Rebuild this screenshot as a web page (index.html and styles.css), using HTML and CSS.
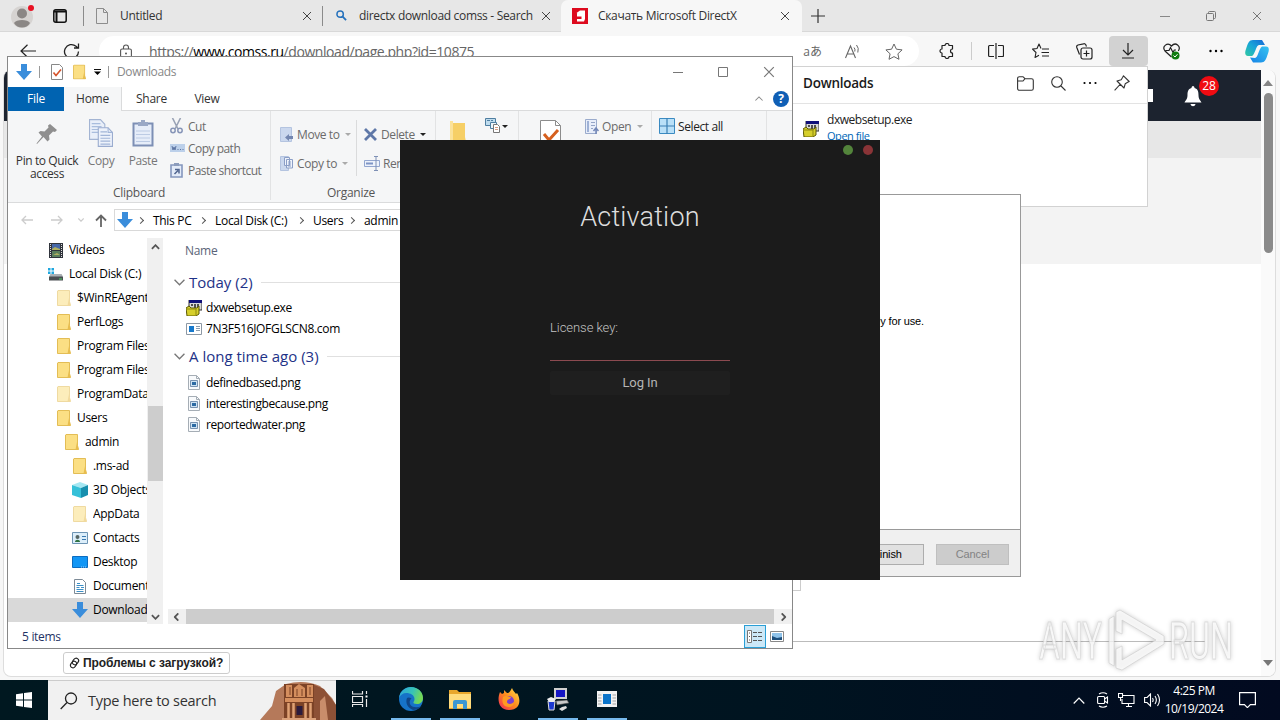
FILE: index.html
```html
<!DOCTYPE html>
<html lang="en">
<head>
    <meta charset="UTF-8">
    <meta name="viewport" content="width=device-width, initial-scale=1.0">
    <title>Desktop</title>
    <link rel="stylesheet" href="styles.css">
</head>
<body>

    <!-- Shared icons -->
    <svg class="defs" width="0" height="0">
        <symbol id="i-close" viewBox="0 0 10 10"><path d="M1 1l8 8M9 1L1 9" fill="none" stroke="currentColor"/></symbol>
        <symbol id="i-folder" viewBox="0 0 14 16"><path d="M1 .5h11.500v11l1 4H.5V1z" fill="#fbdf84" stroke="#e3bd55"/><path d="M12 8l1.500 7.500h-3z" fill="#e8bd4e"/></symbol>
        <symbol id="i-down" viewBox="0 0 16 16"><path d="M5 0h6v7h5l-8 9-8-9h5z" fill="#3a8ddb"/></symbol>
        <symbol id="i-chev" viewBox="0 0 10 6"><path d="M.5.5L5 5 9.500.5" fill="none" stroke="currentColor" stroke-width="1.200"/></symbol>
        <symbol id="i-chev-bold" viewBox="0 0 10 6"><path d="M1 1l4 4 4-4" fill="none" stroke="currentColor" stroke-width="2"/></symbol>
        <symbol id="i-tri" viewBox="0 0 6 3"><path d="M0 0h6L3 3z" fill="currentColor"/></symbol>
        <symbol id="i-png" viewBox="0 0 12 15"><path d="M.5.5h8l3 3v11H.5z" fill="#f8fafc" stroke="#a5adb5"/><path d="M8.500.5v3h3" fill="none" stroke="#a5adb5"/><path d="M2.500 5.500h7v6h-7z" fill="#cfe3f3" stroke="#7892b0"/><path d="M4 7h4v3H4z" fill="#2c6aa3"/></symbol>
        <symbol id="i-setup" viewBox="0 0 16 16"><path d="M3 0h13v10H3z" fill="#d8d8d8" stroke="#333"/><path d="M3 0h13v3H3z" fill="#10107a"/><path d="M5 5h2M8 5h2M11 5h2M8 7h2M11 7h2" stroke="#222" stroke-width="1.500"/><path d="M0 8l3-2 2 2h6l2-2v8l-3 2H1z" fill="#d6cf2c" stroke="#5c5905"/><path d="M1 9h9v6" fill="none" stroke="#8d880f"/></symbol>
        <symbol id="i-app" viewBox="0 0 16 12"><path d="M.5.5h15v11H.5z" fill="#fff" stroke="#8c98a4"/><path d="M3 3h5v6H3z" fill="#1779cc"/><path d="M10 3.500h4M10 5.500h4M10 7.500h4" stroke="#8b9db0"/></symbol>
        <symbol id="i-docs" viewBox="0 0 22 24"><path d="M.5.5h10l4 4v13H.5z" fill="#e9eff9" stroke="#a3b4d3"/><path d="M2.500 4h8M2.500 6.500h9M2.500 9h9M2.500 11.500h9" stroke="#a9bddd"/><path d="M8.500 7.500h9l4 4v12h-13z" fill="#edf2fb" stroke="#9aaccf"/><path d="M17.500 7.500v4h4M10.500 11h6M10.500 14h9M10.500 16.500h9M10.500 19h9M10.500 21.500h9" fill="none" stroke="#a1b5d8"/></symbol>
    </svg>

    <div class="desktop">

        <!-- Browser -->
        <div class="browser">
            <div class="tabstrip">
                <svg class="avatar" width="26" height="26" viewBox="0 0 26 26"><circle cx="11" cy="14" r="11" fill="#d6d3d1"/><circle cx="11" cy="10.500" r="5" fill="#8b8785"/><path d="M3 20c2-4 14-4 16 0-3 6-13 6-16 0z" fill="#8b8785"/><circle cx="20" cy="5" r="3" fill="#e81123"/></svg>
                <svg class="workspaces" width="14" height="14" viewBox="0 0 14 14"><rect x=".8" y=".8" width="12.400" height="12.400" rx="2" fill="none" stroke="#111" stroke-width="1.500"/><path d="M1 2.500h12M3.500 3v10" stroke="#111" stroke-width="2"/></svg>
                <span class="tab-sep"></span>
                <div class="tab tab-first">
                    <svg width="12" height="16" viewBox="0 0 12 16"><path d="M.5.5h7l4 4v11H.5zM7.500.5v4h4" fill="none" stroke="#8d8d8d"/></svg>
                    <span class="tab-title">Untitled</span>
                    <svg class="x" width="10" height="10"><use href="#i-close"/></svg>
                </div>
                <span class="tab-sep"></span>
                <div class="tab tab-search">
                    <svg width="11" height="11" viewBox="0 0 12 12"><circle cx="4.500" cy="4.500" r="3.500" fill="none" stroke="#2672bd" stroke-width="1.600"/><path d="M7 7l4 4" stroke="#2672bd" stroke-width="2"/></svg>
                    <span class="tab-title">directx download comss - Search</span>
                    <svg class="x" width="10" height="10"><use href="#i-close"/></svg>
                </div>
                <div class="tab tab-active">
                    <svg width="16" height="16" viewBox="0 0 16 16"><path d="M0 0h16v16H0z" fill="#dd0a1e"/><path d="M4.500 5L8 2.500h5V11l-1 2.500H5V11h4.500V8.500H5V5.500h4V7" fill="#fff"/></svg>
                    <span class="tab-title">Скачать Microsoft DirectX</span>
                    <svg class="x" width="10" height="10"><use href="#i-close"/></svg>
                </div>
                <svg class="newtab" width="14" height="14" viewBox="0 0 14 14"><path d="M7 0v14M0 7h14" stroke="#333" stroke-width="1.200"/></svg>
                <div class="win-buttons">
                    <svg width="10" height="10" viewBox="0 0 10 10"><path d="M0 5.500h10" stroke="#888"/></svg>
                    <svg width="10" height="10" viewBox="0 0 10 10"><path d="M.5 3.500a1 1 0 0 1 1-1h5a1 1 0 0 1 1 1v5a1 1 0 0 1-1 1h-5a1 1 0 0 1-1-1zM2.500 2V1.500a1 1 0 0 1 1-1h5a1 1 0 0 1 1 1v5a1 1 0 0 1-1 1H8" fill="none" stroke="#777"/></svg>
                    <svg width="10" height="10"><use href="#i-close"/></svg>
                </div>
            </div>

            <div class="toolbar">
                <svg class="back" width="17" height="14" viewBox="0 0 17 14"><path d="M16 7H1M7.500.7L1 7l6.500 6.300" fill="none" stroke="#222" stroke-width="1.200"/></svg>
                <svg class="reload" width="17" height="17" viewBox="0 0 17 17"><path d="M15.500 8.500a7 7 0 1 1-2.500-5.300L15 5M15.500.5V5h-4.500" fill="none" stroke="#222" stroke-width="1.300"/></svg>
                <div class="address">
                    <svg class="lock" width="12" height="15" viewBox="0 0 12 15"><rect x=".6" y="5" width="10.800" height="9" rx="1.500" fill="none" stroke="#555" stroke-width="1.100"/><path d="M3.500 5V3.500a2.500 2.500 0 0 1 5 0V5" fill="none" stroke="#555" stroke-width="1.100"/><circle cx="6" cy="9.500" r="1" fill="#555"/></svg>
                    <span class="url">https://<b>www.comss.ru</b>/download/page.php?id=10875</span>
                    <span class="translate">aあ</span>
                    <svg class="read" width="16" height="15" viewBox="0 0 16 15"><path d="M.5 14L5.500 2l5 12M2.200 10h6.600" fill="none" stroke="#666" stroke-width="1.100"/><path d="M9 3.500q1.500 1.500.8 4M11.500 1q2.800 3 1.300 7.500" fill="none" stroke="#666"/></svg>
                    <svg width="18" height="17" viewBox="0 0 18 17"><path d="M9 1l2.400 5.200 5.700.7-4.200 3.900 1.100 5.500L9 13.600l-5 2.700 1.100-5.500L.9 6.900l5.700-.7z" fill="none" stroke="#666" stroke-linejoin="round"/></svg>
                </div>
                <div class="tools">
                    <svg width="16" height="16" viewBox="0 0 16 16"><path d="M3 2.500h3a2 2 0 0 1 4 0h3.500V6a2 2 0 0 0 0 4v3.500H10a2 2 0 0 1-4 0H3V10a2 2 0 1 1 0-4z" fill="none" stroke="#222" stroke-width="1.200" stroke-linejoin="round"/></svg>
                    <span class="tool-sep"></span>
                    <svg width="16" height="16" viewBox="0 0 16 16"><path d="M6 2.500H1.500A1 1 0 0 0 .6 3.500v9a1 1 0 0 0 1 1H6M10 2.500h4.500a1 1 0 0 1 1 1v9a1 1 0 0 1-1 1H10M8 0v16" fill="none" stroke="#222" stroke-width="1.200"/></svg>
                    <svg width="17" height="16" viewBox="0 0 17 16"><path d="M9 5.500L7 1 5 5.500l-4.500.6L4 9.500 3 14.500l4-2.200M10 6h7M9.500 9.500H17M10 13h7" fill="none" stroke="#222" stroke-width="1.100" stroke-linejoin="round"/></svg>
                    <svg width="17" height="17" viewBox="0 0 17 17"><rect x="5" y="5" width="11" height="11" rx="2" fill="none" stroke="#222" stroke-width="1.200"/><path d="M10.500 7.500v6M7.500 10.500h6M3.500 11.500L.8 4.500A2 2 0 0 1 2 2L7.500.8a2 2 0 0 1 2.500 1.400L10.500 3.500" fill="none" stroke="#222" stroke-width="1.200"/></svg>
                    <span class="dl-button"><svg width="14" height="16" viewBox="0 0 14 16"><path d="M7 0v12M2 7l5 5 5-5M1 15h12" fill="none" stroke="#222" stroke-width="1.200"/></svg></span>
                    <svg width="18" height="17" viewBox="0 0 18 17"><path d="M8.500 14L2 8C-1.500 3.500 4.500-1.500 8.500 3c4-4.500 10 0 6.800 5M2.500 7.500H6l1.500-3 2.500 5 1.300-2.500H13" fill="none" stroke="#222" stroke-width="1.200"/><circle cx="12.500" cy="12.500" r="4" fill="#107c10"/><path d="M10.500 12.500l1.500 1.500 2.500-2.800" fill="none" stroke="#fff"/></svg>
                    <svg width="14" height="4" viewBox="0 0 14 4"><circle cx="1.500" cy="2" r="1.200"/><circle cx="7" cy="2" r="1.200"/><circle cx="12.500" cy="2" r="1.200"/></svg>
                    <svg class="copilot" width="24" height="23" viewBox="0 0 24 23">
                        <linearGradient id="g1" x1="0" y1="1" x2="1" y2="0"><stop offset="0" stop-color="#31c9a2"/><stop offset=".5" stop-color="#18a5d8"/><stop offset="1" stop-color="#1666d6"/></linearGradient>
                        <linearGradient id="g2" x1="0" y1="1" x2="1" y2="0"><stop offset="0" stop-color="#1683e6"/><stop offset="1" stop-color="#36c3f1"/></linearGradient>
                        <path d="M8 0h9l3 5h-6c-3 0-4 10-7 11H3c-3 0-3.500-3-2-7C3 3 4 0 8 0z" fill="url(#g1)"/>
                        <path d="M16 22.500H8l-3-5 5 .5c3 0 4-10 7-11.500h4c3 0 3.500 3 2 7-2 6-3 9-7 9z" fill="url(#g2)"/>
                    </svg>
                </div>
            </div>

            <div class="page">
                <div class="page-body">
                    <div class="site-header">
                        <span class="header-box"></span>
                        <span class="bell">
                            <svg width="18" height="21" viewBox="0 0 18 21"><path d="M9 0c1 0 1.500 1 1.500 2 3.500 1 4 4 4 7 0 4 1.500 5 3 7.500H.5C2 14 3.500 13 3.500 9c0-3 .5-6 4-7 0-1 .5-2 1.500-2zM6.500 18h5c-.5 3-4.500 3-5 0z" fill="#fff"/></svg>
                            <span class="badge">28</span>
                        </span>
                    </div>
                    <div class="site-nav"></div>
                    <div class="site-banner"></div>
                    <div class="site-content">
                        <span class="small-box"></span>
                        <div class="rule"></div>
                        <button class="problems">
                            <svg width="11" height="12" viewBox="0 0 11 12"><rect x="4" y="1" width="5" height="7" rx="2.500" transform="rotate(35 6.500 4.500)" fill="none" stroke="#222" stroke-width="1.200"/><rect x="2" y="4" width="5" height="7" rx="2.500" transform="rotate(35 4.500 7.500)" fill="none" stroke="#222" stroke-width="1.200"/></svg>
                            Проблемы с загрузкой?
                        </button>
                    </div>
                </div>
                <div class="page-scroll">
                    <svg width="10" height="6" viewBox="0 0 10 6"><path d="M0 6l5-6 5 6z" fill="#858585"/></svg>
                    <span class="page-thumb"></span>
                    <svg width="10" height="6" viewBox="0 0 10 6"><path d="M0 0l5 6 5-6z" fill="#777"/></svg>
                </div>
            </div>
        </div>

        <!-- Downloads flyout -->
        <div class="flyout">
            <div class="flyout-head">
                <h2>Downloads</h2>
                <svg width="17" height="15" viewBox="0 0 17 15"><path d="M.6 12V2.500A1.800 1.800 0 0 1 2.400.7H6l2 2h6.500a1.800 1.800 0 0 1 1.800 1.800V12.500a1.800 1.800 0 0 1-1.800 1.800h-12A1.800 1.800 0 0 1 .6 12.500zM.6 5H6l2-2.300" fill="none" stroke="#333" stroke-width="1.100"/></svg>
                <svg width="15" height="15" viewBox="0 0 15 15"><circle cx="6" cy="6" r="5.300" fill="none" stroke="#333" stroke-width="1.100"/><path d="M10 10l4.500 4.500" stroke="#333" stroke-width="1.100"/></svg>
                <svg width="14" height="4" viewBox="0 0 14 4"><circle cx="1.500" cy="2" r="1.100"/><circle cx="7" cy="2" r="1.100"/><circle cx="12.500" cy="2" r="1.100"/></svg>
                <svg width="16" height="16" viewBox="0 0 16 16"><path d="M9.500.8l5.700 5.700-1.500.8-2.500 1.500-1.200 4.200L3 6l4.200-1.200L8.700 2.300zM6 9.500L.6 15.400" fill="none" stroke="#333" stroke-width="1.100" stroke-linejoin="round"/></svg>
            </div>
            <div class="flyout-item">
                <svg width="16" height="16"><use href="#i-setup"/></svg>
                <div class="flyout-text">
                    <span>dxwebsetup.exe</span>
                    <a>Open file</a>
                </div>
            </div>
        </div>

        <!-- Installer -->
        <div class="installer">
            <div class="installer-body">Components installed are now ready for use.</div>
            <div class="installer-foot">
                <span class="btn">Finish</span>
                <span class="btn btn-off">Cancel</span>
            </div>
        </div>

        <!-- File explorer -->
        <div class="explorer">
            <div class="titlebar">
                <svg width="16" height="16"><use href="#i-down"/></svg>
                <span class="bar"></span>
                <svg class="qa-check" width="12" height="16" viewBox="0 0 12 16"><path d="M.5.5h8l3 3v12H.5z" fill="#fff" stroke="#888"/><path d="M2.500 8.500l2.500 3 5-6" fill="none" stroke="#d5532a" stroke-width="1.600"/></svg>
                <svg width="13" height="16" viewBox="0 0 14 16"><use href="#i-folder"/></svg>
                <svg class="qa-more" width="7" height="6" viewBox="0 0 7 6"><path d="M0 .5h7" stroke="#111"/><path d="M0 2.500h7L3.500 6z"/></svg>
                <span class="bar"></span>
                <span class="title">Downloads</span>
                <svg class="tb-min" width="10" height="10" viewBox="0 0 10 10"><path d="M0 5.500h10" stroke="#777"/></svg>
                <svg class="tb-max" width="10" height="10" viewBox="0 0 10 10"><path d="M.5.5h9v9h-9z" fill="none" stroke="#777"/></svg>
                <svg class="tb-close" width="12" height="12"><use href="#i-close"/></svg>
            </div>
            <div class="ribbon-tabs">
                <span class="rt rt-file">File</span>
                <span class="rt rt-home">Home</span>
                <span class="rt rt-share">Share</span>
                <span class="rt rt-view">View</span>
                <svg class="collapse" width="8" height="5" viewBox="0 0 10 6"><path d="M.5 5.500L5 1l4.500 4.500" fill="none" stroke="#888" stroke-width="1.300"/></svg>
                <span class="help">?</span>
            </div>
            <div class="ribbon">
                <div class="group g-clip">
                    <div class="group-items">
                        <div class="big big-pin">
                            <svg width="22" height="22" viewBox="0 0 22 22"><path d="M14 1l7 6-2 2-2-.5-4 4 .5 4-2 2-4-4.500L1 21l-.5-.5L6 13.500 2.500 9.500l2-1.500 4 .5 4-4-.5-2z" fill="#8f8f8f"/></svg>
                            <span>Pin to Quick<br>access</span>
                        </div>
                        <div class="big big-copy">
                            <svg width="24" height="28" viewBox="0 0 22 24" preserveAspectRatio="none"><use href="#i-docs"/></svg>
                            <span>Copy</span>
                        </div>
                        <div class="big big-paste">
                            <svg width="22" height="28" viewBox="0 0 22 28"><path d="M1.500 4.500h19v22h-19z" fill="#e6edf9" stroke="#7d8fb5" stroke-width="2"/><path d="M6 3h3V1h4v2h3v4H6z" fill="#99a8c6"/><path d="M4 12h14M4 15.500h14M4 19h14M4 22.500h14" stroke="#bccbe4"/></svg>
                            <span>Paste</span>
                        </div>
                        <div class="stack stack-cut">
                            <div class="small"><svg width="13" height="16" viewBox="0 0 13 16"><path d="M2.500 0L8 11M10.500 0L5 11" stroke="#9aa3b5" stroke-width="1.600"/><circle cx="3" cy="12.500" r="2.200" fill="none" stroke="#8795b8" stroke-width="1.500"/><circle cx="10" cy="12.500" r="2.200" fill="none" stroke="#8795b8" stroke-width="1.500"/></svg>Cut</div>
                            <div class="small path"><svg width="15" height="8" viewBox="0 0 15 8"><path d="M0 0h15v8H0z" fill="#bcd0ea"/><path d="M2 2l1 4 1-3 1 3 1-4M7.500 5.500h1M10 5.500h1M12.500 5.500h1" fill="none" stroke="#5d75a3"/></svg>Copy path</div>
                            <div class="small"><svg width="13" height="15" viewBox="0 0 13 15"><path d="M1 2h11v12H1z" fill="#e3ebf8" stroke="#8497bd" stroke-width="1.600"/><path d="M4 0h5v3H4z" fill="#8c9cbc"/><path d="M4.500 11L8 7.500M5 6.500h4v4" fill="none" stroke="#50658f" stroke-width="1.500"/></svg>Paste shortcut</div>
                        </div>
                    </div>
                    <div class="group-name">Clipboard</div>
                </div>
                <div class="group g-org">
                    <div class="group-items">
                        <div class="stack stack-two move">
                            <div class="small"><svg width="13" height="15" viewBox="0 0 13 15"><path d="M.5.5h11v14H.5z" fill="#cbd8ee" stroke="#b4c4e0"/><path d="M13 9H9V7l-4 3.500L9 14v-2h4z" fill="#7487b0"/></svg>Move to<svg class="arr dim" width="6" height="3"><use href="#i-tri"/></svg></div>
                            <div class="small"><svg width="13" height="15" viewBox="0 0 13 15"><path d="M.5.5h8v14h-8z" fill="#cbd8ee" stroke="#b4c4e0"/><path d="M4.500 1.500h5v8h-5zM6.500 3.500h6v8.500h-6z" fill="#eef3fb" stroke="#8b9ec6"/><path d="M8 6h3M8 8h3M8 10h3" stroke="#8b9ec6"/></svg>Copy to<svg class="arr dim" width="6" height="3"><use href="#i-tri"/></svg></div>
                        </div>
                        <span class="inner-sep"></span>
                        <div class="stack stack-two">
                            <div class="small"><svg width="13" height="13" viewBox="0 0 13 13"><path d="M1 1l11 11M12 1L1 12" stroke="#5f78a8" stroke-width="2.800"/></svg>Delete<svg class="arr" width="6" height="3"><use href="#i-tri"/></svg></div>
                            <div class="small rename"><svg width="16" height="15" viewBox="0 0 16 15"><path d="M.5 4.500h15v6H.5z" fill="#edf2fb" stroke="#93a6cf"/><path d="M2 6.500h7v2H2z" fill="#7e95c5"/><path d="M12 1v13M10 .5h4M10 14.500h4" stroke="#7e90b5"/></svg>Rename</div>
                        </div>
                    </div>
                    <div class="group-name">Organize</div>
                </div>
                <div class="group g-new">
                    <div class="group-items">
                        <svg class="new-folder" width="18" height="30" viewBox="0 0 18 30"><path d="M0 2h15v14l3 14H0z" fill="#f6cf66"/><path d="M0 0h3v30H0z" fill="#fbe29a"/></svg>
                        <svg class="new-item" width="16" height="15" viewBox="0 0 16 15"><path d="M.5.5h10v7H.5z" fill="#bfdcee" stroke="#4f7ea1"/><path d="M2 2.500h3M6 2.500h2M5.500 4.500h6v6h-6z" fill="#eef4f8" stroke="#4f7ea1"/><path d="M8.500 6.500h4l2 2v6h-6z" fill="#fff" stroke="#777"/><path d="M10 9.500h3M10 11.500h3" stroke="#d89a80"/></svg>
                        <svg class="arr" width="6" height="3"><use href="#i-tri"/></svg>
                    </div>
                </div>
                <div class="group g-open">
                    <div class="group-items">
                        <svg class="prop" width="22" height="30" viewBox="0 0 22 30"><path d="M.5.5h15l5 5V30H.5z" fill="#fff" stroke="#8c8c8c"/><path d="M15.500.5v5h5" fill="none" stroke="#8c8c8c"/><path d="M4 14l5 6 9-10" fill="none" stroke="#d6601e" stroke-width="3"/></svg>
                        <div class="small"><svg width="14" height="15" viewBox="0 0 14 15"><path d="M.5.5h11v14H.5z" fill="#e8eefa" stroke="#9aabcc"/><path d="M2 2h2v11H2z" fill="#9fb2d6"/><path d="M6 3.500h4M6 6.500h4M6 9.500h2" stroke="#94a5c7"/><path d="M11 15V10M8.500 12L11 9l2.500 3" fill="none" stroke="#7388b8" stroke-width="1.500"/></svg>Open<svg class="arr dim" width="6" height="3"><use href="#i-tri"/></svg></div>
                    </div>
                </div>
                <div class="group g-select">
                    <div class="small"><svg width="16" height="16" viewBox="0 0 16 16"><path d="M.5.5h15v15H.5z" fill="#b9e0f8" stroke="#3a8bc2"/><path d="M8 0v16M0 8h16" stroke="#3a7fb4" stroke-width="1.200"/></svg>Select all</div>
                </div>
            </div>

            <div class="navrow">
                <svg class="nav-back" width="12" height="10" viewBox="0 0 12 10"><path d="M12 5H1M5 1L1 5l4 4" fill="none" stroke="#ccc" stroke-width="1.300"/></svg>
                <svg class="nav-fwd" width="12" height="10" viewBox="0 0 12 10"><path d="M0 5h11M7 1l4 4-4 4" fill="none" stroke="#ccc" stroke-width="1.300"/></svg>
                <svg class="nav-hist" width="6" height="4" viewBox="0 0 10 6"><path d="M.5.5L5 5 9.500.5" fill="none" stroke="#ccc" stroke-width="2"/></svg>
                <svg class="nav-up" width="12" height="13" viewBox="0 0 12 13"><path d="M6 13V1.500M1 6.500l5-5 5 5" fill="none" stroke="#666" stroke-width="1.800"/></svg>
                <div class="crumbs">
                    <svg width="16" height="16"><use href="#i-down"/></svg>
                    <i></i><span class="c-pc">This PC</span>
                    <i></i><span class="c-disk">Local Disk (C:)</span>
                    <i></i><span class="c-users">Users</span>
                    <i></i><span class="c-admin">admin</span>
                </div>
            </div>

            <div class="ex-body">
                <div class="tree">
                    <div class="node l0"><svg width="14" height="15" viewBox="0 0 14 15"><path d="M0 0h14v15H0z" fill="#30343c"/><path d="M3 1h8v6H3z" fill="#4668a8"/><path d="M3 8h8v6H3z" fill="#5b7f5c"/><path d="M3 6l3-2 5 2v1H3zM4 12l4-2 3 2z" fill="#b0b060"/><path d="M1.500 1v13M12.500 1v13" stroke="#ddd" stroke-dasharray="1 1"/></svg><span>Videos</span></div>
                    <div class="node l0 disk"><svg width="15" height="13" viewBox="0 0 15 13"><path d="M0 0h2.500v2.500H0zM3.500 0H6v2.500H3.500zM0 3.500h2.500V6H0zM3.500 3.500H6V6H3.500z" fill="#1ea7df"/><path d="M3 6h10l2 3v3.500H1V9z" fill="#4a4f52"/><path d="M3 6h10l2 2.500H1z" fill="#aab0b4"/><path d="M11 11h3" stroke="#4dd265"/></svg><span>Local Disk (C:)</span></div>
                    <div class="node l1 pale"><svg width="14" height="16"><use href="#i-folder"/></svg><span>$WinREAgent</span></div>
                    <div class="node l1"><svg width="14" height="16"><use href="#i-folder"/></svg><span>PerfLogs</span></div>
                    <div class="node l1"><svg width="14" height="16"><use href="#i-folder"/></svg><span>Program Files</span></div>
                    <div class="node l1"><svg width="14" height="16"><use href="#i-folder"/></svg><span>Program Files (x86)</span></div>
                    <div class="node l1 pale"><svg width="14" height="16"><use href="#i-folder"/></svg><span>ProgramData</span></div>
                    <div class="node l1"><svg width="14" height="16"><use href="#i-folder"/></svg><span>Users</span></div>
                    <div class="node l2"><svg width="14" height="16"><use href="#i-folder"/></svg><span>admin</span></div>
                    <div class="node l3"><svg width="14" height="16"><use href="#i-folder"/></svg><span>.ms-ad</span></div>
                    <div class="node l3"><svg width="16" height="16" viewBox="0 0 16 16"><path d="M0 3l8-3 8 3-7 3z" fill="#a5e7f2"/><path d="M0 3l9 3v10l-9-3z" fill="#35c0d8"/><path d="M16 3L9 6v10l7-3z" fill="#178fae"/></svg><span>3D Objects</span></div>
                    <div class="node l3 pale"><svg width="14" height="16"><use href="#i-folder"/></svg><span>AppData</span></div>
                    <div class="node l3"><svg width="16" height="12" viewBox="0 0 16 12"><path d="M.5.5h15v11H.5z" fill="#dceefa" stroke="#6d94b4"/><path d="M3 10c0-3 5-3 5 0z" fill="#2f7243"/><circle cx="5.500" cy="5" r="2" fill="#566"/><path d="M10 4.500h4M10 7.500h4" stroke="#3a79b0"/></svg><span>Contacts</span></div>
                    <div class="node l3"><svg width="16" height="12" viewBox="0 0 16 12"><path d="M.5.5h15v11H.5z" fill="#1296f5" stroke="#0c6cc0"/><path d="M9 11h6" stroke="#9cd1fa" stroke-dasharray="1 1"/></svg><span>Desktop</span></div>
                    <div class="node l3"><svg width="12" height="15" viewBox="0 0 12 15"><path d="M.5.5h8l3 3v11H.5z" fill="#fff" stroke="#7d8a96"/><path d="M3 4.500h3M2.500 6.500h7M2.500 8.500h3M7 8.500h3M2.500 10.500h7M2.500 12.500h7" stroke="#3c8fc6"/></svg><span>Documents</span></div>
                    <div class="node l3 selected"><svg width="16" height="16"><use href="#i-down"/></svg><span>Downloads</span></div>
                </div>
                <div class="vscroll">
                    <svg class="flip" width="9" height="6"><use href="#i-chev-bold"/></svg>
                    <span class="vthumb"></span>
                    <svg width="9" height="6"><use href="#i-chev-bold"/></svg>
                </div>
                <div class="files">
                    <div class="col-head">Name</div>
                    <div class="file-group"><svg width="11" height="7"><use href="#i-chev"/></svg><span>Today (2)</span></div>
                    <div class="file"><svg width="16" height="16"><use href="#i-setup"/></svg>dxwebsetup.exe</div>
                    <div class="file wide"><svg width="16" height="12"><use href="#i-app"/></svg>7N3F516JOFGLSCN8.com</div>
                    <div class="file-group later"><svg width="11" height="7"><use href="#i-chev"/></svg><span>A long time ago (3)</span></div>
                    <div class="file"><svg width="12" height="15"><use href="#i-png"/></svg>definedbased.png</div>
                    <div class="file"><svg width="12" height="15"><use href="#i-png"/></svg>interestingbecause.png</div>
                    <div class="file"><svg width="12" height="15"><use href="#i-png"/></svg>reportedwater.png</div>
                    <div class="hscroll">
                        <svg class="left" width="9" height="6"><use href="#i-chev-bold"/></svg>
                        <span class="hthumb"></span>
                        <svg class="right" width="9" height="6"><use href="#i-chev-bold"/></svg>
                    </div>
                </div>
            </div>

            <div class="status">
                <span>5 items</span>
                <span class="view-details"><svg width="16" height="13" viewBox="0 0 16 13"><path d="M.5.5h4v12h-4z" fill="#fff" stroke="#777"/><path d="M2 3h1M2 6.500h1M2 10h1M6 2.500h4M11 2.500h4M6 6.500h4M11 6.500h4M6 10.500h4M11 10.500h4" stroke="#555"/></svg></span>
                <svg class="view-thumbs" width="14" height="11" viewBox="0 0 14 11"><path d="M.5.5h13v10H.5z" fill="#fff" stroke="#888"/><path d="M2 2h10v7H2z" fill="#8fc3ea"/><path d="M2 5l5 2 5-1v3H2z" fill="#1d4f7c"/></svg>
            </div>
        </div>

        <!-- Activation dialog -->
        <div class="activation">
            <div class="act-bar">
                <span class="dot green"></span>
                <span class="dot red"></span>
            </div>
            <h1>Activation</h1>
            <div class="act-form">
                <label>License key:</label>
                <div class="key-input"></div>
                <div class="login">Log In</div>
            </div>
        </div>

        <!-- Watermark -->
        <svg class="watermark" width="210" height="70" viewBox="0 0 210 70">
            <g fill="#fff" fill-opacity=".75" stroke="#ccc" stroke-opacity=".6" stroke-width="1">
                <text x="9" y="52" textLength="63" lengthAdjust="spacingAndGlyphs">ANY</text>
                <text x="139" y="52" textLength="64" lengthAdjust="spacingAndGlyphs">RUN</text>
                <path d="M86 5l4-2 44 26v8L92 63l-6-2V42l6-3v14l34-20-34-20v14l-6-3z" />
                <path d="M79 12l5-3v50l-5-3z"/>
            </g>
        </svg>

        <!-- Taskbar -->
        <div class="taskbar">
            <div class="start"><svg width="16" height="16" viewBox="0 0 16 16"><path d="M0 2.200L7 1.200V7.500H0zM8 1l8-1v7.500H8zM0 8.500h7v6.300L0 13.800zM8 8.500h8V16l-8-1z" fill="#fff"/></svg></div>
            <div class="search">
                <svg width="18" height="18" viewBox="0 0 18 18"><circle cx="11" cy="6.500" r="5.500" fill="none" stroke="#222" stroke-width="1.300"/><path d="M7 10.500L.7 17" stroke="#222" stroke-width="1.300"/></svg>
                <span>Type here to search</span>
                <svg class="petra" width="76" height="39" viewBox="0 0 76 39">
                    <path d="M0 39L12 25 16 10 26 3q18-5 34 2l12 12 4 7v15z" fill="#b5795a"/>
                    <path d="M52 3l12 5 12 16v15H52z" fill="#8d5136"/>
                    <path d="M60 20l5-5 3 24h-8z" fill="#c98d6b"/>
                    <path d="M24 3h30v36H24z" fill="#7c4226"/>
                    <path d="M25 17h28v4H25zM26 4h6v12h-6zM47 4h6v12h-6zM34 7l5-4 6 4v9H34z" fill="#d58e5e"/>
                    <path d="M28.500 22v16M33.500 22v16M45.500 22v16M50.500 22v16" stroke="#e0a276" stroke-width="2.500"/>
                    <path d="M36.500 25h6v9h-6z" fill="#2b1b3c"/>
                    <path d="M30 6v8M37 8v7M42 8v7M50 6v8" stroke="#7c4226"/>
                    <path d="M22 37h34v2H22z" fill="#dba17a"/>
                </svg>
            </div>
            <div class="task task-view"><svg width="17" height="16" viewBox="0 0 17 16"><path d="M.5 0v3h10V0M.5 5.500h10v6H.5zM.5 16v-2.500h10V16M14.500 0v3M14.500 8v8" fill="none" stroke="#e8e8e8" stroke-width="1.200"/><path d="M13.500 4.500h2v2h-2z" fill="#fff"/></svg></div>
            <div class="task open"><svg width="24" height="24" viewBox="0 0 24 24">
                <linearGradient id="e1" x1="0" y1="0" x2="1" y2=".3"><stop offset="0" stop-color="#2ba3e0"/><stop offset=".6" stop-color="#37c3b6"/><stop offset="1" stop-color="#74d857"/></linearGradient>
                <circle cx="12" cy="12" r="12" fill="#1673c8"/>
                <path d="M0 11C1 4 6 0 12 0c7 0 12 5 12 11 0 4-3 6-6 6-3 0-4-1-3.500-2 .5-.6 1-1.500 1-3C15.500 8 11 6 7.500 6 4 6 1 8 0 11z" fill="url(#e1)"/>
                <path d="M8 11c-2 5 1 10 6 12 3 0 6-1 8.500-4-4 2-9 1.500-11-1-1.500-2-1-5 1-6.500-1.500-1-3.500-1.500-4.500-.5z" fill="#0f4688"/>
            </svg></div>
            <div class="task open"><svg width="22" height="19" viewBox="0 0 22 19"><path d="M0 0h8l2 2h12v17H0z" fill="#e8a72c"/><path d="M0 4h22v14H0z" fill="#ffdc7c"/><path d="M4 19v-7q0-2 2-2h10q2 0 2 2v7h-4v-5H8v5z" fill="#3a97d2"/></svg></div>
            <div class="task"><svg width="22" height="22" viewBox="0 0 22 22">
                <linearGradient id="f1" x1="1" y1="0" x2="0" y2="1"><stop offset="0" stop-color="#ffe14a"/><stop offset=".5" stop-color="#ff8a1e"/><stop offset="1" stop-color="#f0235c"/></linearGradient>
                <path d="M2 4l2 2 2-1V2l3 3c2 0 3-1 5-5 1 3 3 4 4 6l1-1c4 6 4 17-8 17C0 22-1 11 2 4z" fill="url(#f1)"/><circle cx="11" cy="13" r="5" fill="#7a3fd0"/><path d="M5 9c3-2 5 0 8 0-1 3-4 2-4 5 0 2 4 3 7 0 0 4-4 6-8 4.500C4 17 4 12 5 9z" fill="#ff9a22"/>
            </svg></div>
            <div class="task open"><svg width="23" height="23" viewBox="0 0 23 23"><path d="M8 1h11v9H8z" fill="#1515c4" stroke="#d0d0d0" stroke-width="2"/><path d="M9 13l11-1 2 3-12 2z" fill="#c9c9c9" stroke="#444" stroke-width=".6"/><path d="M1 13h7l-1 9H2z" fill="#1c39d0" stroke="#ddd"/><path d="M0 11l4-2 5 2-2 3H2z" fill="#eee"/><path d="M12 21l3-2 4-1 1 2-5 3z" fill="#ddd"/></svg></div>
            <div class="task open"><svg width="20" height="16" viewBox="0 0 20 16"><path d="M0 0h20v16H0z" fill="#f2f2f2"/><path d="M6 3h8v10H6z" fill="#0b74c9"/><path d="M1 4h3.500M1 7h3.500M1 10h3.500M1 13h3.500M15.500 4H19M15.500 7H19M15.500 10H19M15.500 13H19" stroke="#a3a3a3"/></svg></div>
            <div class="tray">
                <svg width="12" height="7" viewBox="0 0 12 7"><path d="M.7 6.500L6 1l5.300 5.500" fill="none" stroke="#fff" stroke-width="1.200"/></svg>
                <svg width="12" height="16" viewBox="0 0 12 16"><rect x=".6" y="4.500" width="7" height="7" rx="1" fill="none" stroke="#fff" stroke-width="1.100"/><path d="M7.500 7l3-2v6l-3-2M2 2q4-2.500 8 0M2 14q4 2.500 8 0" fill="none" stroke="#fff" stroke-width="1.100"/></svg>
                <svg width="17" height="15" viewBox="0 0 17 15"><path d="M5 2.500h11v8H4V6M8 13.500h6M10.500 11v2.500M.5.5h4v4h-4zM2.500 5v3" fill="none" stroke="#fff" stroke-width="1.100"/></svg>
                <svg width="17" height="14" viewBox="0 0 17 14"><path d="M.6 4.500h2.500L6.500 1v12L3 9.500H.6zM8.500 5q1.300 2 0 4M11 3q2.700 4 0 8M13.500 1q4 6 0 12" fill="none" stroke="#fff" stroke-width="1.100"/></svg>
                <div class="clock">4:25 PM<br>10/19/2024</div>
                <svg class="notify" width="17" height="16" viewBox="0 0 17 16"><path d="M.6.600h15.800v12h-5l-3 3-3-3H.6z" fill="none" stroke="#fff" stroke-width="1.200"/></svg>
            </div>
        </div>
    </div>

</body>
</html>
```

FILE: styles.css
```css
/* Base */
* {
    box-sizing: border-box;
}
body {
    margin: 0;
    font-family: "Open Sans", "Noto Sans", "Noto Sans CJK JP", sans-serif;
    font-size: 12px;
    color: #000;
}
svg {
    display: block;
    flex: none;
}
.defs {
    position: absolute;
}
.desktop {
    position: relative;
    width: 1280px;
    height: 720px;
    overflow: hidden;
    white-space: nowrap;
}

/* Browser */
.browser {
    display: flex;
    flex-direction: column;
    height: 680px;
    background: #f7f7f7;
}
.tabstrip {
    display: flex;
    align-items: center;
    height: 32px;
    background: #e7e7e7;
    border-bottom: 1px solid #d8d8d8;
}
.avatar {
    margin-left: 11px;
}
.workspaces {
    margin: 0 16px 0 16px;
}
.tab-sep {
    width: 1px;
    height: 20px;
    background: #8b8b8b;
}
.tab {
    display: flex;
    align-items: center;
    height: 32px;
    color: #333;
    font-size: 12px;
    letter-spacing: -0.32px;
}
.tab .x {
    margin-left: auto;
    color: #444;
}
.tab-first {
    width: 238px;
    padding: 0 10px 0 12px;
}
.tab-first .tab-title {
    margin-left: 12px;
}
.tab-search {
    width: 238px;
    padding: 0 10px 0 13px;
}
.tab-search .tab-title {
    margin-left: 12px;
}
.tab-active {
    width: 241px;
    padding: 0 12px 0 11px;
    background: #f7f7f7;
    border-radius: 7px 7px 0 0;
}
.tab-active .tab-title {
    margin-left: 10px;
}
.newtab {
    margin-left: 9px;
}
.win-buttons {
    display: flex;
    gap: 36px;
    margin: 0 18px 0 auto;
    color: #777;
}
.toolbar {
    display: flex;
    align-items: center;
    height: 38px;
}
.back {
    margin-left: 20px;
}
.reload {
    margin: 0 19px 0 26px;
}
.address {
    display: flex;
    align-items: center;
    width: 820px;
    height: 30px;
    padding: 0 16px 0 21px;
    border-radius: 15px;
    background: #fff;
}
.url {
    margin-left: 17px;
    color: #666;
    font-size: 14px;
    letter-spacing: -0.44px;
}
.url b {
    color: #000;
    font-weight: normal;
}
.translate {
    margin-left: auto;
    color: #666;
    font-size: 12px;
}
.read {
    margin: 0 24px 0 23px;
}
.tools {
    display: grid;
    grid-template-columns: 44px 4px 45px 44px 44px 44px 44px 44px 38px;
    align-items: center;
    justify-items: center;
    margin-left: 6px;
}
.tool-sep {
    width: 1px;
    height: 18px;
    background: #ccc;
}
.dl-button {
    display: flex;
    align-items: center;
    justify-content: center;
    width: 39px;
    height: 30px;
    border-radius: 4px;
    background: #d2d2d2;
}

/* Web page */
.page {
    display: flex;
    height: 607px;
    margin: 0 4px 0 3px;
    border: 1px solid #ddd;
    border-top: 0;
    border-radius: 8px;
    background: #fff;
    overflow: hidden;
}
.page-body {
    flex: 1;
    display: flex;
    flex-direction: column;
}
.site-header {
    display: flex;
    align-items: center;
    height: 51px;
    background: #1c232f;
}
.header-box {
    width: 10px;
    height: 13px;
    margin-left: 1139px;
    background: #fff;
}
.bell {
    position: relative;
    margin: 2px 0 0 31px;
}
.badge {
    position: absolute;
    left: 15px;
    top: -10px;
    width: 20px;
    height: 20px;
    border-radius: 50%;
    background: #f00b12;
    color: #fff;
    font-size: 12px;
    line-height: 20px;
    text-align: center;
}
.site-nav {
    height: 37px;
    background: #e7e7e7;
}
.site-banner {
    height: 106px;
    background: #f3f3f3;
}
.site-content {
    flex: 1;
    display: flex;
    flex-direction: column;
    align-items: flex-start;
}
.small-box {
    width: 13px;
    height: 13px;
    margin: 314px 0 0 784px;
    border: 1px solid #ccc;
}
.rule {
    width: 1190px;
    height: 1px;
    margin: 50px 0 0 11px;
    background: #bbb;
}
.problems {
    display: flex;
    align-items: center;
    gap: 3px;
    width: 167px;
    height: 22px;
    margin: 10px 0 0 59px;
    padding: 0 0 0 5px;
    border: 1px solid #ccc;
    border-radius: 3px;
    background: #fff;
    color: #222;
    font: bold 12px "Liberation Sans", Arial, sans-serif;
    letter-spacing: -0.08px;
}
.page-scroll {
    display: flex;
    flex-direction: column;
    align-items: center;
    width: 14px;
    padding: 10px 0;
    background: #fafafa;
}
.page-thumb {
    width: 9px;
    height: 160px;
    margin: 7px 0 auto;
    border-radius: 5px;
    background: #8a8a8a;
}

/* Downloads flyout */
.flyout {
    position: absolute;
    left: 780px;
    top: 66px;
    width: 368px;
    height: 141px;
    border: 1px solid #d2d2d2;
    background: #fff;
}
.flyout-head {
    display: flex;
    align-items: center;
    height: 37px;
    padding: 0 17px 4px 22px;
    border-bottom: 1px solid #e3e3e3;
    gap: 17px;
}
.flyout-head h2 {
    margin: 0 auto 0 0;
    font-size: 13.5px;
    font-weight: 600;
    letter-spacing: -0.25px;
    color: #1a1a1a;
}
.flyout-item {
    display: flex;
    padding: 7px 22px;
    gap: 8px;
}
.flyout-item > svg {
    margin-top: 10px;
}
.flyout-text {
    display: flex;
    flex-direction: column;
    line-height: 17px;
    color: #222;
    letter-spacing: -0.45px;
}
.flyout-text a {
    color: #0067b8;
    font-size: 11px;
    line-height: 16px;
}

/* Installer */
.installer {
    position: absolute;
    left: 600px;
    top: 194px;
    width: 421px;
    height: 383px;
    border: 1px solid #999;
    background: #fff;
    font-family: "Liberation Sans", Arial, sans-serif;
    font-size: 11px;
    letter-spacing: -0.15px;
}
.installer-body {
    height: 335px;
    padding: 120px 96px 0 0;
    border-bottom: 1px solid #999;
    text-align: right;
}
.installer-foot {
    display: flex;
    align-items: center;
    justify-content: flex-end;
    gap: 12px;
    height: 46px;
    padding: 3px 11px 0 0;
    background: #f0f0f0;
}
.btn {
    width: 73px;
    height: 21px;
    border: 1px solid #adadad;
    background: #e1e1e1;
    line-height: 19px;
    text-align: center;
}
.btn-off {
    border-color: #bfbfbf;
    background: #ccc;
    color: #838383;
}

/* File explorer */
.explorer {
    position: absolute;
    left: 7px;
    top: 56px;
    width: 786px;
    height: 593px;
    border: 1px solid #888;
    background: #fff;
    letter-spacing: -0.3px;
}
.titlebar {
    display: flex;
    align-items: center;
    height: 30px;
    padding: 0 17px 1px 8px;
}
.bar {
    width: 1px;
    height: 12px;
    margin-left: 7px;
    background: #999;
}
.qa-check {
    margin: 0 10px 0 11px;
}
.qa-more {
    margin-left: 8px;
}
.title {
    margin-left: 8px;
    color: #888;
    letter-spacing: -0.4px;
}
.tb-min {
    margin-left: auto;
}
.tb-max {
    margin: 0 35px;
}
.tb-close {
    color: #777;
}
.ribbon-tabs {
    display: flex;
    align-items: center;
    height: 24px;
    border-bottom: 1px solid #dadbdc;
    color: #333;
    letter-spacing: -0.25px;
}
.rt {
    height: 24px;
    line-height: 24px;
    text-align: center;
}
.rt-file {
    width: 56px;
    background: #0063b1;
    color: #fff;
}
.rt-home {
    width: 58px;
    border-right: 1px solid #dadbdc;
    background: #f5f6f7;
}
.rt-share {
    width: 59px;
}
.rt-view {
    width: 52px;
}
.collapse {
    margin-left: auto;
}
.help {
    width: 16px;
    height: 16px;
    margin: 0 3px 0 10px;
    border-radius: 50%;
    background: #0f5fb5;
    color: #fff;
    font-weight: bold;
    line-height: 16px;
    text-align: center;
}
.ribbon {
    display: flex;
    height: 92px;
    border-bottom: 1px solid #dadbdc;
    background: #f5f6f7;
    color: #6b6b6b;
    letter-spacing: -0.4px;
}
.group {
    display: flex;
    flex-direction: column;
    justify-content: space-between;
    height: 89px;
    border-right: 1px solid #e2e3e4;
}
.group-items {
    display: flex;
    height: 75px;
}
.group-name {
    line-height: 14px;
    text-align: center;
    color: #555;
    letter-spacing: -0.25px;
}
.g-clip {
    width: 263px;
}
.g-org {
    width: 165px;
}
.g-org .group-name {
    padding-right: 4px;
}
.g-new {
    width: 83px;
}
.g-open {
    width: 133px;
}
.g-select {
    width: 115px;
    justify-content: flex-start;
    padding: 4px 0 0 7px;
    color: #222;
}
.big {
    display: flex;
    flex-direction: column;
    align-items: center;
    line-height: 13px;
    text-align: center;
}
.big svg {
    margin-top: 8px;
}
.big span {
    margin-top: 7px;
}
.big-pin {
    width: 78px;
    color: #333;
}
.big-pin svg {
    margin: 12px 0 2px;
}
.big-copy {
    width: 30px;
    color: #777;
}
.big-paste {
    width: 54px;
    color: #777;
}
.stack {
    display: flex;
    flex-direction: column;
    padding-top: 4px;
}
.stack-cut {
    letter-spacing: -0.52px;
}
.stack-two {
    padding-top: 9px;
}
.move {
    width: 69px;
}
.small {
    display: flex;
    align-items: center;
    gap: 4px;
    height: 22px;
}
.stack-cut .small {
    gap: 5px;
}
.stack-cut .path {
    gap: 3px;
}
.stack-two .small {
    height: 29px;
}
.stack-two .rename {
    gap: 3px;
}
.arr {
    margin-left: 1px;
    color: #222;
}
.arr.dim {
    color: #aaa;
}
.g-org .group-items {
    padding-left: 9px;
}
.inner-sep {
    width: 1px;
    height: 56px;
    margin: 9px 7px 0;
    background: #dadbdc;
}
.new-folder {
    margin: 10px 0 0 14px;
}
.new-item {
    margin: 7px 0 0 17px;
}
.new-item + .arr {
    margin-top: 14px;
}
.prop {
    margin: 9px 23px 0 21px;
}
.g-open .small {
    margin-top: 4px;
    gap: 3px;
}
.g-open .arr {
    margin-left: 3px;
}
.g-select .small {
    gap: 3px;
}

/* Address row */
.navrow {
    display: flex;
    align-items: center;
    height: 35px;
    padding-bottom: 1px;
}
.nav-back {
    margin-left: 13px;
}
.nav-fwd {
    margin-left: 18px;
}
.nav-hist {
    margin-left: 15px;
}
.nav-up {
    margin: 0 7px 0 11px;
}
.crumbs {
    display: flex;
    align-items: center;
    flex: 1;
    height: 22px;
    padding-left: 2px;
    border: 1px solid #d9d9d9;
    letter-spacing: -0.3px;
}
.crumbs i {
    width: 5px;
    height: 5px;
    margin: 0 10px 0 5px;
    border-top: 1px solid #555;
    border-right: 1px solid #555;
    transform: rotate(45deg);
}
.crumbs span {
    margin-right: 2px;
}
.crumbs .c-pc {
    width: 40px;
}
.crumbs .c-disk {
    width: 76px;
}
.crumbs .c-users {
    width: 29px;
}

/* Tree and files */
.ex-body {
    display: flex;
    height: 386px;
}
.tree {
    width: 139px;
    overflow: hidden;
}
.node {
    display: flex;
    align-items: center;
    height: 24px;
}
.node svg {
    margin-right: 6px;
}
.node span {
    flex: 1;
    padding-bottom: 2px;
    overflow: hidden;
}
.l0 {
    padding-left: 41px;
}
.disk {
    padding-left: 40px;
}
.l1 {
    padding-left: 49px;
}
.l2 {
    padding-left: 57px;
}
.l3 {
    padding-left: 65px;
}
.l3 svg[width="16"] {
    margin: 0 5px 0 -1px;
}
.l3 svg[width="12"] {
    margin: 0 7px 0 1px;
}
.pale svg {
    opacity: 0.55;
}
.selected {
    background: #d9d9d9;
}
.vscroll {
    display: flex;
    flex-direction: column;
    align-items: center;
    width: 16px;
    padding: 6px 0 4px;
    background: #f0f0f0;
    color: #555;
}
.vthumb {
    width: 15px;
    height: 75px;
    margin: 156px 0 auto;
    background: #cdcdcd;
}
.flip {
    transform: rotate(180deg);
}
.files {
    flex: 1;
    display: flex;
    flex-direction: column;
    margin-left: 5px;
}
.col-head {
    height: 26px;
    margin-bottom: 3px;
    padding-left: 17px;
    line-height: 26px;
    color: #5a6478;
    letter-spacing: -0.3px;
}
.file-group {
    display: flex;
    align-items: center;
    height: 30px;
    padding-left: 6px;
    color: #1e3287;
    font-size: 15px;
    letter-spacing: 0;
}
.file-group span {
    padding-bottom: 1px;
}
.file-group svg {
    margin-right: 4px;
    color: #777;
}
.file-group::after {
    content: "";
    flex: 1;
    height: 1px;
    margin-left: 8px;
    background: #e0e0e0;
}
.file-group.later {
    height: 32px;
    margin-top: 1px;
}
.file {
    display: flex;
    align-items: center;
    height: 21px;
    padding-left: 18px;
    letter-spacing: -0.4px;
}
.file.wide {
    letter-spacing: -0.33px;
}
.file svg {
    margin-right: 4px;
}
.file svg[width="12"] {
    margin: 0 6px 0 2px;
}
.hscroll {
    display: flex;
    align-items: center;
    justify-content: space-between;
    height: 15px;
    margin-top: auto;
    padding: 0 4px;
    background: #f0f0f0;
    color: #555;
}
.hthumb {
    width: 588px;
    height: 15px;
    background: #cdcdcd;
}
.left {
    transform: rotate(90deg);
}
.right {
    transform: rotate(-90deg);
}
.status {
    display: flex;
    align-items: center;
    height: 24px;
    padding: 0 8px 0 14px;
    color: #1e3264;
    letter-spacing: -0.3px;
}
.view-details {
    display: flex;
    align-items: center;
    justify-content: center;
    width: 22px;
    height: 23px;
    margin-left: auto;
    border: 1px solid #2a9fd6;
    background: #cce8f7;
}
.view-thumbs {
    margin-left: 4px;
}

/* Activation dialog */
.activation {
    position: absolute;
    left: 400px;
    top: 140px;
    width: 480px;
    height: 440px;
    background: #1b1b1b;
    color: #ddd;
    font-family: Roboto, sans-serif;
}
.act-bar {
    display: flex;
    justify-content: flex-end;
    align-items: center;
    gap: 10px;
    height: 20px;
    padding-right: 7px;
}
.dot {
    width: 10px;
    height: 10px;
    border-radius: 50%;
}
.green {
    background: #53843b;
}
.red {
    background: #8a3437;
}
.activation h1 {
    margin: 38px 0 0;
    font-size: 27px;
    font-weight: 300;
    line-height: 38px;
    text-align: center;
    letter-spacing: 0.2px;
}
.act-form {
    display: flex;
    flex-direction: column;
    width: 180px;
    margin: 84px auto 0;
    font-size: 13px;
    color: #b4b4b4;
}
.act-form label {
    line-height: 16px;
    font-weight: 300;
    letter-spacing: -0.05px;
    color: #c4c4c4;
}
.key-input {
    height: 25px;
    border-bottom: 1px solid #8c4a50;
}
.login {
    height: 24px;
    margin-top: 10px;
    border-radius: 2px;
    background: #1f1f1f;
    line-height: 24px;
    text-align: center;
    letter-spacing: -0.1px;
}

/* Watermark */
.watermark {
    position: absolute;
    left: 1030px;
    top: 607px;
    font-family: Roboto, sans-serif;
    font-size: 51px;
    filter: drop-shadow(0 0 2px rgba(0, 0, 0, 0.25));
}

/* Taskbar */
.taskbar {
    position: absolute;
    left: 0;
    top: 680px;
    display: flex;
    width: 1280px;
    height: 40px;
    background: linear-gradient(90deg, #001820, #001420 60%, #020a20);
}
.start {
    display: flex;
    align-items: center;
    justify-content: center;
    width: 48px;
}
.search {
    display: flex;
    align-items: center;
    width: 288px;
    padding-left: 12px;
    border-top: 1px solid #ccc;
    background: #f1f1f1;
    color: #333;
    font-size: 14.5px;
    letter-spacing: -0.27px;
}
.search span {
    margin-left: 10px;
}
.petra {
    margin-left: auto;
}
.task {
    display: flex;
    align-items: center;
    justify-content: center;
    width: 40px;
    height: 40px;
    margin-left: 9px;
    border-bottom: 2px solid transparent;
}
.task-view {
    margin: 0 2px 0 4px;
}
.open {
    border-bottom-color: #76b9ed;
}
.tray {
    display: flex;
    align-items: center;
    gap: 9px;
    margin-left: auto;
    padding-right: 24px;
    color: #fff;
    letter-spacing: -0.5px;
}
.tray > svg:first-child {
    margin-right: 3px;
}
.clock {
    width: 62px;
    margin-left: -7px;
    line-height: 18px;
    text-align: center;
}
.notify {
    margin-left: 5px;
}
```
